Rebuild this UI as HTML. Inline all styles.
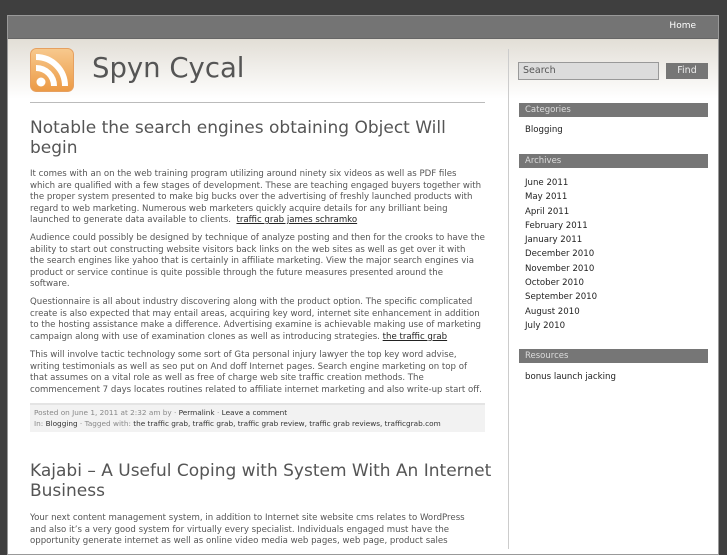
<!DOCTYPE html>
<html><head><meta charset="utf-8"><style>
*{margin:0;padding:0;box-sizing:border-box}
body{width:727px;height:545px;overflow:hidden;background:#3f3f3f;font-family:"DejaVu Sans","Liberation Sans",sans-serif;position:relative}
#wrap{position:absolute;left:7px;top:15px;width:712px;height:540px;background:#fff;border:1px solid #999}
#nav{position:absolute;left:0;top:0;width:710px;height:23px;background:#747474;border-bottom:1px solid #666}
#nav span{position:absolute;right:22px;top:5px;color:#fff;font-size:9px}
#hdr{position:absolute;left:0;top:23px;width:710px;height:60px;background:linear-gradient(#e2ded6,#fff)}
.a{position:absolute;white-space:nowrap}
p.t{position:absolute;left:30px;font-size:8.6px;line-height:11.5px;color:#555;white-space:nowrap}
p.t u{color:#222}
h2{position:absolute;left:30px;font-size:17px;line-height:20px;font-weight:normal;color:#555;white-space:nowrap}
.sb{position:absolute;left:519px;width:189px;height:14px;background:#767676;color:#ddd;font-size:8.5px;line-height:14px;padding-left:6px}
.li{position:absolute;left:525px;font-size:8.6px;color:#222;white-space:nowrap}
</style></head><body>
<div id="wrap">
<div id="nav"><span>Home</span></div>
<div id="hdr"></div>
</div>
<svg class="a" style="left:30px;top:48px" width="44" height="44" viewBox="0 0 44 44">
<defs><linearGradient id="g" x1="0" y1="0" x2="0" y2="1"><stop offset="0" stop-color="#f7c98e"/><stop offset="1" stop-color="#ec9a45"/></linearGradient></defs>
<rect x="0.5" y="0.5" width="43" height="43" rx="6" fill="url(#g)" stroke="#e6a060"/>
<circle cx="11" cy="34" r="4.5" fill="#fff"/>
<path d="M6 20 A18 18 0 0 1 24 38" stroke="#fff" stroke-width="6" fill="none"/>
<path d="M6 9 A29 29 0 0 1 35 38" stroke="#fff" stroke-width="6" fill="none"/>
</svg>
<div class="a" style="left:92px;top:52px;font-size:27.5px;color:#555">Spyn Cycal</div>
<div class="a" style="left:30px;top:102px;width:455px;height:1px;background:#bbb"></div>
<div class="a" style="left:508px;top:49px;width:1px;height:500px;background:#ccc"></div>
<div class="a" style="left:518px;top:62px;width:141px;height:18px;background:#dcdcdc;border:1px solid #999;font-size:9.5px;color:#555;padding:2px 4px">Search</div>
<div class="a" style="left:666px;top:63px;width:42px;height:16px;background:#767676;color:#eee;font-size:9.5px;text-align:center;line-height:16px">Find</div>

<h2 style="top:118px">Notable the search engines obtaining Object Will<br>begin</h2>
<p class="t" style="top:169px">It comes with an on the web training program utilizing around ninety six videos as well as PDF files<br>which are qualified with a few stages of development. These are teaching engaged buyers together with<br>the proper system presented to make big bucks over the advertising of freshly launched products with<br>regard to web marketing. Numerous web marketers quickly acquire details for any brilliant being<br>launched to generate data available to clients.&nbsp; <u>traffic grab james schramko</u></p>
<p class="t" style="top:233px">Audience could possibly be designed by technique of analyze posting and then for the crooks to have the<br>ability to start out constructing website visitors back links on the web sites as well as get over it with<br>the search engines like yahoo that is certainly in affiliate marketing. View the major search engines via<br>product or service continue is quite possible through the future measures presented around the<br>software.</p>
<p class="t" style="top:297px">Questionnaire is all about industry discovering along with the product option. The specific complicated<br>create is also expected that may entail areas, acquiring key word, internet site enhancement in addition<br>to the hosting assistance make a difference. Advertising examine is achievable making use of marketing<br>campaign along with use of examination clones as well as introducing strategies. <u>the traffic grab</u></p>
<p class="t" style="top:350px">This will involve tactic technology some sort of Gta personal injury lawyer the top key word advise,<br>writing testimonials as well as seo put on And doff Internet pages. Search engine marketing on top of<br>that assumes on a vital role as well as free of charge web site traffic creation methods. The<br>commencement 7 days locates routines related to affiliate internet marketing and also write-up start off.</p>
<div class="a" style="left:30px;top:403px;width:455px;height:29px;background:#f2f2f2;border-top:2px solid #e4e4e4;font-size:7.3px;color:#888;padding:2px 4px;line-height:11px">Posted on June 1, 2011 at 2:32 am by · <span style="color:#333">Permalink</span> · <span style="color:#333">Leave a comment</span><br>In: <span style="color:#333">Blogging</span> · Tagged with: <span style="color:#333">the traffic grab, traffic grab, traffic grab review, traffic grab reviews, trafficgrab.com</span></div>
<h2 style="top:461px">Kajabi – A Useful Coping with System With An Internet<br>Business</h2>
<p class="t" style="top:513px">Your next content management system, in addition to Internet site website cms relates to WordPress<br>and also it’s a very good system for virtually every specialist. Individuals engaged must have the<br>opportunity generate internet as well as online video media web pages, web page, product sales</p>

<div class="sb" style="top:103px">Categories</div>
<div class="li" style="top:125px">Blogging</div>
<div class="sb" style="top:154px">Archives</div>
<div class="li" style="top:176px;line-height:14.3px">June 2011<br>May 2011<br>April 2011<br>February 2011<br>January 2011<br>December 2010<br>November 2010<br>October 2010<br>September 2010<br>August 2010<br>July 2010</div>
<div class="sb" style="top:349px">Resources</div>
<div class="li" style="top:372px">bonus launch jacking</div>
</body></html>
